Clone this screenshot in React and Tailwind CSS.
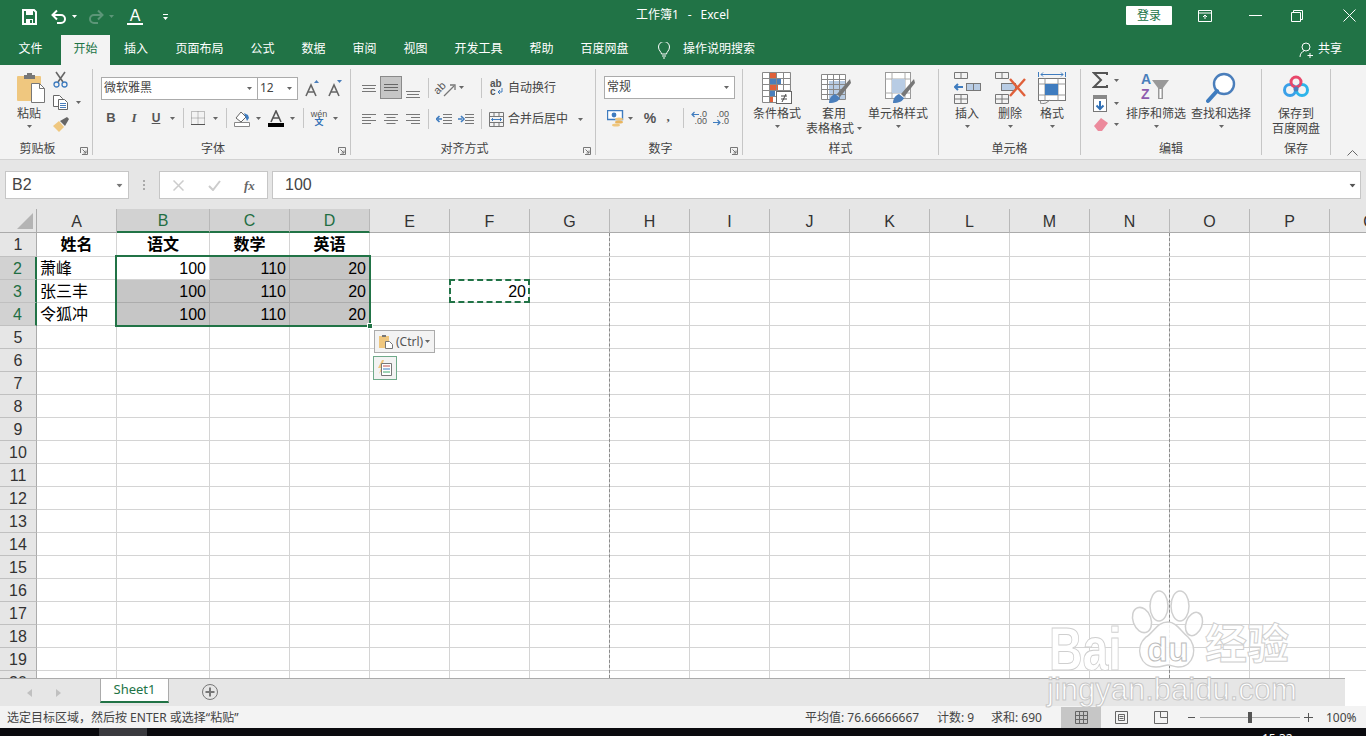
import React from 'react';

const G = '#217346';
const Caret = ({ c = '#666', className = '' }) => (
  <svg width="5" height="3" viewBox="0 0 5 3" className={`shrink-0 ${className}`}><path d="M0 0h5L2.5 3z" fill={c} /></svg>
);
const I = ({ w, h, className = '', children }) => (
  <svg width={w} height={h} viewBox={`0 0 ${w} ${h}`} fill="none" className={`shrink-0 ${className}`}>{children}</svg>
);
const Sep = ({ className = '', h = 'h-[20px]' }) => <div className={`w-px ${h} bg-[#c6c6c6] shrink-0 ${className}`} />;

const Launcher = () => (
  <svg width="8" height="8" viewBox="0 0 8 8" className="absolute right-[4px] bottom-[0px]" fill="none">
    <path d="M.5 6V.5H7.5V7.5H2M2.5 2.5L6 6M3.5 6H6V3.5" stroke="#777" />
  </svg>
);
const Group = ({ w, label, children }) => (
  <div className={`${w} h-[86px] mt-[4px] flex flex-col border-r border-[#c6c6c6] shrink-0`}>
    <div className="h-[72px] shrink-0">{children}</div>
    <div className={`relative h-[14px] flex items-center justify-center pt-[2px] text-[12px] leading-none text-[#444] ${label.launcher ? 'pr-[17px]' : ''}`}>
      {label.text}
      {label.launcher && <Launcher />}
    </div>
  </div>
);
const Big = ({ w, icon, lines }) => (
  <div className={`${w} shrink-0 flex flex-col items-center`}>
    <div className="h-[37px] w-full flex items-start justify-center pt-[3px]">{icon}</div>
    {lines.map((l, i) => (
      <div key={i} className="h-[15px] leading-[15px] text-[12px] text-[#444] whitespace-nowrap flex items-center">{l}</div>
    ))}
    {lines.length === 1 && <Caret className="mt-[4px]" />}
  </div>
);

/* icons */
const SaveI = () => (
  <I w={15} h={16} className="ml-[22px]"><path d="M1 1h11l2 2v12H1z" stroke="#fff" strokeWidth="2" /><rect x="4" y="2" width="7" height="4" fill="#fff" /><rect x="4" y="10" width="7" height="5" fill="#fff" /><rect x="8" y="11" width="2" height="3" fill={G} /></I>
);
const Undo = ({ c = '#fff', flip }) => (
  <I w={16} h={15} className={flip ? '-scale-x-100' : ''}><path d="M2 6h8a4 4 0 0 1 0 8H6" stroke={c} strokeWidth="2" /><path d="M6 1.5L1.5 6 6 10.5" stroke={c} strokeWidth="2" /></I>
);
const PasteI = () => (
  <I w={29} h={32} className="ml-[4px]">
    <rect x="0" y="4" width="24" height="25" rx="1" fill="#efc77f" />
    <path d="M7 7V3h3V1h5v2h3v4z" fill="#777" />
    <path d="M14.5 11.5h8l5 5v14h-13z" fill="#fff" stroke="#777" />
    <path d="M22.5 11.5v5h5" stroke="#777" />
  </I>
);
const Scissors = () => (
  <I w={15} h={17}><path d="M3 1l7 10M12 1L5 11" stroke="#666" strokeWidth="1.6" /><circle cx="3.5" cy="13.5" r="2.5" stroke="#3f7cbf" strokeWidth="1.3" /><circle cx="11.5" cy="13.5" r="2.5" stroke="#3f7cbf" strokeWidth="1.3" /></I>
);
const Copy = () => (
  <I w={16} h={15}>
    <path d="M.5.5h6l3 3v8H.5z" fill="#fff" stroke="#666" />
    <path d="M5.5 4.5h6l3 3v7h-9z" fill="#fff" stroke="#666" />
    <path d="M7 8.5h6M7 10.5h6M7 12.5h6" stroke="#4a7ebb" />
  </I>
);
const Brush = () => (
  <I w={17} h={15}><path d="M0 9l6-5 5 6-5 5z" fill="#efc77f" /><path d="M7 4l7-4 2 2-4 7z" fill="#666" /></I>
);
const Ags = ({ up }) => (
  <I w={14} h={17}>
    <path d="M1 16L6 5l5 11M3 12h6" stroke="#666" strokeWidth="1.6" />
    <path d={up ? 'M9 3l2.5-3L14 3z' : 'M9 0h5l-2.5 3z'} fill="#4a7ebb" />
  </I>
);
const Borders = () => (
  <I w={14} h={14}><path d="M.5.5h13v13H.5zM7 .5v13M.5 7h13" stroke="#888" strokeDasharray="1 1" /><path d="M0 13.5h14" stroke="#555" /></I>
);
const Fill = () => (
  <I w={16} h={17}><path d="M2 8l5-6 5 5-5 5z" fill="#fff" stroke="#666" /><path d="M10 3l4 2 1 3-2 3z" fill="#3f7cbf" /><path d="M.5 12.5h15v4H.5z" fill="#fff" stroke="#888" /></I>
);
const FontA = () => (
  <I w={16} h={17}><path d="M3 12L8 1l5 11M5 8h6" stroke="#555" strokeWidth="1.6" /><rect y="13" width="16" height="4" fill="#000" /></I>
);
const AlignV = ({ y }) => (
  <I w={14} h={23}><path d={`M0 ${y}.5h14M1 ${y + 3}.5h12M0 ${y + 6}.5h14`} stroke="#777" /></I>
);
const AlignH = ({ t }) => (
  <I w={14} h={12}>
    {t === 'l' && <path d="M0 1.5h14M0 4.5h9M0 7.5h14M0 10.5h9" stroke="#777" />}
    {t === 'c' && <path d="M0 1.5h14M2.5 4.5h9M0 7.5h14M2.5 10.5h9" stroke="#777" />}
    {t === 'r' && <path d="M0 1.5h14M5 4.5h9M0 7.5h14M5 10.5h9" stroke="#777" />}
  </I>
);
const Orient = () => (
  <span className="relative w-[20px] h-[18px] flex shrink-0">
    <span className="-rotate-45 font-['Liberation_Sans'] text-[11px] leading-none text-[#555] ml-[-1px] mt-[3px]">ab</span>
    <svg width="20" height="18" viewBox="0 0 20 18" fill="none" className="absolute left-0 top-0"><path d="M8 17L18 7" stroke="#777" strokeWidth="1.3" /><path d="M14 6h5v5" stroke="#777" strokeWidth="1.3" /></svg>
  </span>
);
const Indent = ({ out }) => (
  <I w={16} h={12}>
    <path d="M7 1.5h9M7 4.5h9M7 7.5h9M7 10.5h9M0 1.5" stroke="#777" />
    <path d={out ? 'M6 6H2M3.5 3L.5 6l3 3' : 'M0 6h4M3 3l3 3-3 3'} stroke="#3f7cbf" strokeWidth="1.6" />
  </I>
);
const Wrap = () => (
  <span className="flex flex-col w-[14px] font-['Liberation_Sans'] text-[10px] leading-[8px] text-[#555] font-bold">
    <span>ab</span><span className="flex">c<svg width="6" height="7" viewBox="0 0 6 7" fill="none" className="ml-[1px]"><path d="M5 0v4H1M3 2L1 4l2 2" stroke="#3f7cbf" /></svg></span>
  </span>
);
const Merge = () => (
  <I w={15} h={15}><path d="M.5.5h14v14H.5zM.5 4.5h14M.5 10.5h14M5 .5v4M10 .5v4M5 10.5v4M10 10.5v4" stroke="#777" /><path d="M2.5 7.5h10M4 6L2.5 7.5 4 9M11 6l1.5 1.5L11 9" stroke="#3f7cbf" /></I>
);
const Money = () => (
  <I w={17} h={17}><path d="M.5.5h15v9H.5z" fill="#fff" stroke="#3f7cbf" strokeWidth="1.4" /><circle cx="7" cy="5" r="2.4" fill="#3f7cbf" /><ellipse cx="12" cy="9" rx="4" ry="1.6" fill="#efc77f" /><ellipse cx="12" cy="12" rx="4" ry="1.6" fill="#e8b560" /><ellipse cx="9" cy="15" rx="4" ry="1.6" fill="#efc77f" /></I>
);
const Dec = ({ inc }) => (
  <span className="relative w-[16px] h-[15px] shrink-0 flex flex-col items-end font-['Liberation_Sans'] text-[9px] leading-[7.5px] text-[#555]">
    <span>{inc ? '.0' : '.00'}</span><span>{inc ? '.00' : '.0'}</span>
    <svg width="8" height="7" viewBox="0 0 8 7" fill="none" className={`absolute left-0 ${inc ? 'top-0' : 'top-[8px]'}`}>
      <path d={inc ? 'M8 3.5H1M3.5 1L1 3.5 3.5 6' : 'M0 3.5h7M4.5 1L7 3.5 4.5 6'} stroke="#3f7cbf" strokeWidth="1.2" />
    </svg>
  </span>
);
const Table = ({ x = 0, y = 0, cols = 4, rows = 5, cw = 7, ch = 6 }) => {
  const l = [];
  for (let c = 0; c <= cols; c++) l.push(`M${x + c * cw + .5} ${y + .5}v${rows * ch}`);
  for (let r = 0; r <= rows; r++) l.push(`M${x + .5} ${y + r * ch + .5}h${cols * cw}`);
  return <path d={l.join('')} stroke="#888" />;
};
const CondI = () => (
  <I w={30} h={32} className="ml-[-1px]">
    <rect x="0.5" y="0.5" width="27" height="30" fill="#fff" />
    <rect x="8" y="1" width="6" height="6" fill="#e0603a" /><rect x="8" y="7" width="11" height="6" fill="#4a7ebb" /><rect x="8" y="13" width="8" height="6" fill="#e0603a" /><rect x="8" y="19" width="5" height="6" fill="#4a7ebb" /><rect x="8" y="25" width="3" height="5" fill="#e0603a" />
    <Table cols={4} rows={5} cw={7} ch={6} />
    <rect x="14.5" y="19.5" width="15" height="12" fill="#fff" stroke="#666" />
    <path d="M19 24h6M19 27h6M24 22l-4 8" stroke="#444" />
  </I>
);
const TableStyle = () => (
  <I w={30} h={32} className="ml-[4px]">
    <rect x="0.5" y="2.5" width="24" height="25" fill="#fff" />
    <rect x="8" y="9" width="16" height="18" fill="#b8cce4" />
    <Table y={2} cols={4} rows={5} cw={6} ch={5} />
    <path d="M29 7L16 22l3 3L30 11z" fill="#777" />
    <path d="M8 31c0-5 3-8 6-9l5 4c-1 3-5 5-11 5z" fill="#4a7ebb" />
  </I>
);
const CellStyle = () => (
  <I w={30} h={32} className="ml-[4px]">
    <rect x="0.5" y="0.5" width="25" height="26" fill="#fff" stroke="#999" />
    <path d="M.5 7h25M.5 21h25M7 .5v26M20 .5v26" stroke="#aaa" />
    <rect x="7" y="7" width="13" height="14" fill="#b8cce4" />
    <path d="M29 7L16 22l3 3L30 11z" fill="#777" />
    <path d="M8 31c0-5 3-8 6-9l5 4c-1 3-5 5-11 5z" fill="#4a7ebb" />
  </I>
);
const Ins = () => (
  <I w={27} h={32}>
    <path d="M.5.5h13v6H.5zM7 .5v6M.5 22.5h13v9H.5zM.5 27h13M7 22.5v9" stroke="#777" />
    <rect x="12.5" y="11.5" width="14" height="7" fill="#b8cce4" stroke="#777" /><path d="M19.5 11.5v7" stroke="#777" />
    <path d="M9 15H1M4 12l-3 3 3 3" stroke="#3f7cbf" strokeWidth="2" />
  </I>
);
const Del = () => (
  <I w={31} h={32}>
    <path d="M.5.5h13v6H.5zM7 .5v6M.5 22.5h13v9H.5zM.5 27h13M7 22.5v9" stroke="#777" />
    <rect x="6.5" y="11.5" width="14" height="7" fill="#b8cce4" stroke="#777" />
    <path d="M15 7l15 17M30 7L15 24" stroke="#e0603a" strokeWidth="2.4" />
  </I>
);
const Fmt = () => (
  <I w={28} h={32}>
    <path d="M.5 0v5M27.5 0v5M3 2.5h22M5 .5L3 2.5 5 4.5M23 .5l2 2-2 2" stroke="#3f7cbf" />
    <rect x=".5" y="6.5" width="27" height="22" fill="#fff" stroke="#777" />
    <path d="M.5 12h27M.5 23h27M7 6.5v22M20 6.5v22" stroke="#999" />
    <rect x="7" y="12" width="13" height="11" fill="#3f7cbf" />
    <path d="M2 28l1 4 5-1 4-3" stroke="#888" />
  </I>
);
const Sigma = () => (
  <I w={16} h={16}><path d="M15 3V1H2l7 7-7 7h13v-2" stroke="#555" strokeWidth="2" /></I>
);
const FillDown = () => (
  <I w={14} h={17}><rect x=".5" y=".5" width="13" height="16" fill="#fff" stroke="#777" /><rect x="0" y="0" width="14" height="4" fill="#888" /><path d="M7 6v8M3.5 10.5L7 14l3.5-3.5" stroke="#2f6fb5" strokeWidth="2" /></I>
);
const Eraser = () => (
  <I w={14} h={13}><path d="M0 8l7-8 7 5-6 8H4z" fill="#ec8a9c" /></I>
);
const Sort = () => (
  <span className="relative flex w-[30px] h-[32px]">
    <span className="flex flex-col font-['Liberation_Sans'] font-bold text-[14px] leading-[15px]">
      <span className="text-[#4a7ebb]">A</span><span className="text-[#8e5bae]">Z</span>
    </span>
    <svg width="17" height="20" viewBox="0 0 17 20" className="ml-[1px] mt-[8px]" fill="none"><path d="M0 0h17l-6 8v11h-5V8z" fill="#999" /><path d="M7.5 9v9h2V9" fill="#fff" /></svg>
  </span>
);
const Find = () => (
  <I w={30} h={32}><circle cx="18" cy="12" r="10" fill="#fff" stroke="#4a7ebb" strokeWidth="2.4" /><path d="M11 19L2 29" stroke="#3f7cbf" strokeWidth="4" strokeLinecap="round" /></I>
);
const BaiduCloud = () => (
  <I w={26} h={24}>
    <circle cx="7" cy="15" r="5.5" stroke="#3aa0e8" strokeWidth="3" />
    <circle cx="19" cy="15" r="5.5" stroke="#2db4ea" strokeWidth="3" />
    <circle cx="13" cy="7" r="5" stroke="#e8476a" strokeWidth="3" />
    <circle cx="13" cy="14" r="2.5" fill="#4a7ebb" />
  </I>
);
const GridIco = () => (
  <I w={13} h={13}><path d="M.5.5h12v12H.5zM4.5.5v12M8.5.5v12M.5 4.5h12M.5 8.5h12" stroke="#666" /></I>
);
const PageIco = () => (
  <I w={13} h={13}><path d="M.5.5h12v12H.5z" stroke="#666" /><path d="M3.5 3.5h6v6h-6zM4.5 5.5h4M4.5 7.5h4" stroke="#666" /></I>
);
const BreakIco = () => (
  <I w={14} h={13}><path d="M.5 12.5V.5h13v12zM6.5.5v6h7" stroke="#666" /></I>
);

const cols = [
  ['A', 'w-[80px]'], ['B', 'w-[93px]'], ['C', 'w-[80px]'], ['D', 'w-[80px]'], ['E', 'w-[80px]'], ['F', 'w-[80px]'],
  ['G', 'w-[80px]'], ['H', 'w-[80px]'], ['I', 'w-[80px]'], ['J', 'w-[80px]'], ['K', 'w-[80px]'], ['L', 'w-[80px]'],
  ['M', 'w-[80px]'], ['N', 'w-[80px]'], ['O', 'w-[80px]'], ['P', 'w-[80px]'], ['Q', 'w-[80px]'],
];
const data = {
  1: ['姓名', '语文', '数学', '英语'],
  2: ['萧峰', '100', '110', '20'],
  3: ['张三丰', '100', '110', '20'],
  4: ['令狐冲', '100', '110', '20'],
};
const tabs = [
  ['文件', 'w-[61px]'], ['开始', 'w-[49px]'], ['插入', 'w-[52px]'], ['页面布局', 'w-[75px]'], ['公式', 'w-[51px]'], ['数据', 'w-[51px]'],
  ['审阅', 'w-[51px]'], ['视图', 'w-[51px]'], ['开发工具', 'w-[75px]'], ['帮助', 'w-[51px]'], ['百度网盘', 'w-[75px]'],
];

function Cell({ r, c, i }) {
  const v = data[r] && data[r][i];
  const inSel = r >= 2 && r <= 4 && i >= 1 && i <= 3;
  const active = r === 2 && i === 1;
  const grey = inSel && !active;
  const isF3 = r === 3 && c[0] === 'F';
  const bold = r === 1;
  return (
    <div className={`${c[1]} shrink-0 h-full border-r border-b pt-[1px] ${grey ? 'bg-[#c6c6c6] border-[#acacac]' : 'border-[#d4d4d4]'} ${bold ? 'font-bold justify-center' : i === 0 ? 'pl-[3px] justify-start' : 'justify-end pr-[3px]'} flex items-center text-[16px] leading-none text-black overflow-hidden`}>
      {isF3 ? '20' : v}
    </div>
  );
}

export default function App() {
  return (
    <div className="relative w-[1366px] h-[736px] overflow-hidden flex flex-col bg-white font-['Noto_Sans','Noto_Sans_CJK_SC',sans-serif]">
      {/* title bar */}
      <div className="h-[35px] shrink-0 bg-[#217346] flex items-center pb-[2px] text-white">
        <SaveI />
        <div className="ml-[14px]"><Undo /></div>
        <Caret c="#fff" className="ml-[5px]" />
        <div className="ml-[11px]"><Undo c="#5c9678" flip /></div>
        <Caret c="#5c9678" className="ml-[5px]" />
        <div className="ml-[13px] w-[16px] h-[17px] flex flex-col items-center">
          <span className="font-['Liberation_Sans'] text-[16px] leading-[15px] font-normal">A</span>
          <span className="w-full h-[2px] bg-white" />
        </div>
        <svg width="5" height="6" viewBox="0 0 5 6" className="ml-[20px]"><path d="M0 0h5v1H0zM0 3h5L2.5 6z" fill="#fff" /></svg>
        <div className="ml-[468px] mb-[4px] w-[93px] text-[12px] whitespace-nowrap flex justify-between"><span>工作簿1</span><span>-</span><span>Excel</span></div>
        <div className="ml-[397px] mb-[2px] flex items-center">
          <div className="w-[46px] h-[19px] bg-white rounded-[1px] text-[12px] text-[#217346] flex items-center justify-center">登录</div>
          <svg width="14" height="12" viewBox="0 0 14 12" fill="none" className="ml-[26px]"><path d="M.5.5h13v11H.5zM.5 3h13M7 9V5M5 7l2-2 2 2" stroke="#fff" /></svg>
          <svg width="13" height="1" className="ml-[37px]"><rect width="13" height="1" fill="#fff" /></svg>
          <svg width="12" height="12" viewBox="0 0 12 12" fill="none" className="ml-[29px]"><path d="M.5 2.5h9v9h-9zM2.5 2.5v-2h9v9h-2" stroke="#fff" /></svg>
          <svg width="13" height="13" viewBox="0 0 13 13" fill="none" className="ml-[40px]"><path d="M.5.5l12 12M12.5.5l-12 12" stroke="#fff" /></svg>
        </div>
      </div>
      {/* tabs */}
      <div className="h-[30px] shrink-0 bg-[#217346] flex items-stretch text-white text-[12px]">
        {tabs.map(([t, w]) => (
          <div key={t} className={`${w} shrink-0 flex items-center justify-center pb-[2px] ${t === '开始' ? 'bg-[#f3f3f3] text-[#217346]' : ''}`}>{t}</div>
        ))}
        <svg width="14" height="17" viewBox="0 0 14 17" fill="none" className="ml-[15px] self-center shrink-0"><path d="M4.5 12c0-2-3-3.500-3-7a5.500 5.500 0 0 1 11 0c0 3.500-3 5-3 7zM5 14h4M6 16h2" stroke="#fff" /></svg>
        <div className="ml-[12px] self-center w-[72px] whitespace-nowrap pb-[2px]">操作说明搜索</div>
        <svg width="15" height="16" viewBox="0 0 15 16" fill="none" className="ml-[544px] self-center shrink-0"><circle cx="7" cy="5" r="4" stroke="#fff" /><path d="M1 15c0-3 2-5.500 4-6M11 11v5M8.500 13.500h5.500" stroke="#fff" /></svg>
        <div className="ml-[4px] self-center whitespace-nowrap pb-[2px]">共享</div>
      </div>
      {/* ribbon */}
      <div className="h-[95px] shrink-0 bg-[#f3f3f3] border-b border-[#d2d2d2] flex">
        <Group w="w-[93px]" label={{ text: '剪贴板', launcher: true }}>
          <div className="flex pl-[15px]">
            <Big w="w-[28px]" icon={<PasteI />} lines={['粘贴']} />
            <div className="ml-[10px] pt-[2px] flex flex-col">
              <div className="h-[17px]"><Scissors /></div>
              <div className="mt-[7px] h-[15px] flex items-center"><Copy /><Caret className="ml-[7px]" /></div>
              <div className="mt-[7px] h-[15px]"><Brush /></div>
            </div>
          </div>
        </Group>
        <Group w="w-[258px]" label={{ text: '字体', launcher: true }}>
          <div className="pl-[8px]">
            <div className="flex items-center mt-[8px] h-[23px]">
              <div className="w-[157px] h-full bg-white border border-[#ababab] flex items-center justify-between pl-[2px] pr-[5px] pb-[1px] text-[12px] text-[#444]">微软雅黑<Caret /></div>
              <div className="w-[40px] h-full bg-white border border-[#ababab] border-l-0 flex items-center justify-between pl-[2px] pr-[5px] pb-[1px] text-[12px] text-[#444]">12<Caret /></div>
              <div className="ml-[7px]"><Ags up /></div>
              <div className="ml-[9px]"><Ags /></div>
            </div>
            <div className="flex items-center mt-[7px] h-[22px] text-[#555] font-['Liberation_Serif']">
              <span className="ml-[3px] w-[14px] text-center font-['Liberation_Sans'] font-bold text-[13px]">B</span>
              <span className="ml-[9px] w-[14px] text-center italic font-bold text-[13px]">I</span>
              <span className="ml-[8px] w-[14px] text-center font-['Liberation_Sans'] font-bold text-[12px] underline">U</span>
              <Caret className="ml-[7px]" />
              <Sep className="ml-[8px]" />
              <div className="ml-[7px]"><Borders /></div>
              <Caret className="ml-[8px]" />
              <Sep className="ml-[8px]" />
              <div className="ml-[7px]"><Fill /></div>
              <Caret className="ml-[6px]" />
              <div className="ml-[7px]"><FontA /></div>
              <Caret className="ml-[6px]" />
              <Sep className="ml-[8px]" />
              <div className="ml-[7px] w-[16px] flex flex-col items-center font-['Liberation_Sans'] text-[9px] leading-[8px]"><span>wén</span><span className="text-[#2f6fb5] font-['Noto_Sans_CJK_SC'] text-[9px] font-bold">文</span></div>
              <Caret className="ml-[6px]" />
            </div>
          </div>
        </Group>
        <Group w="w-[245px]" label={{ text: '对齐方式', launcher: true }}>
          <div className="pl-[11px]">
            <div className="flex items-center mt-[7px] h-[23px]">
              <AlignV y={9} />
              <div className="ml-[4px] w-[22px] h-[23px] bg-[#c6c6c6] border border-[#8a8a8a] flex items-center justify-center"><I w={14} h={9}><path d="M0 1.500h14M0 4.500h14M0 7.500h14" stroke="#666" /></I></div>
              <div className="ml-[4px]"><AlignV y={15} /></div>
              <Sep className="ml-[8px]" />
              <div className="ml-[7px]"><Orient /></div>
              <Caret className="ml-[3px]" />
              <Sep className="ml-[17px]" />
              <div className="ml-[8px]"><Wrap /></div>
              <span className="ml-[4px] text-[12px] text-[#444]">自动换行</span>
            </div>
            <div className="flex items-center mt-[9px] h-[22px]">
              <AlignH t="l" />
              <div className="ml-[8px]"><AlignH t="c" /></div>
              <div className="ml-[8px]"><AlignH t="r" /></div>
              <Sep className="ml-[8px]" />
              <div className="ml-[7px]"><Indent out /></div>
              <div className="ml-[6px]"><Indent /></div>
              <Sep className="ml-[7px]" />
              <div className="ml-[7px]"><Merge /></div>
              <span className="ml-[4px] text-[12px] text-[#444] whitespace-nowrap">合并后居中</span>
              <Caret className="ml-[10px]" />
            </div>
          </div>
        </Group>
        <Group w="w-[147px]" label={{ text: '数字', launcher: true }}>
          <div className="pl-[8px]">
            <div className="mt-[7px] w-[131px] h-[23px] bg-white border border-[#ababab] flex items-center justify-between pl-[2px] pr-[5px] pb-[1px] text-[12px] text-[#444]">常规<Caret /></div>
            <div className="flex items-center mt-[8px] h-[22px] text-[#555]">
              <div className="ml-[3px]"><Money /></div>
              <Caret className="ml-[4px]" />
              <span className="ml-[10px] w-[14px] text-center text-[14px] font-['Liberation_Sans'] font-bold">%</span>
              <span className="ml-[8px] w-[6px] text-center text-[13px] font-['Liberation_Serif'] font-bold leading-none mt-[-4px]">,</span>
              <Sep className="ml-[12px]" />
              <div className="ml-[7px]"><Dec inc /></div>
              <div className="ml-[6px]"><Dec /></div>
            </div>
          </div>
        </Group>
        <Group w="w-[196px]" label={{ text: '样式' }}>
          <div className="flex pl-[7px]">
            <Big w="w-[54px]" icon={<CondI />} lines={['条件格式']} />
            <div className="w-[60px] flex flex-col items-center shrink-0">
              <div className="h-[37px] w-full flex justify-center pt-[3px]"><TableStyle /></div>
              <div className="h-[15px] leading-[15px] text-[12px] text-[#444]">套用</div>
              <div className="h-[15px] leading-[15px] text-[12px] text-[#444] whitespace-nowrap flex items-center">表格格式<Caret className="ml-[3px]" /></div>
            </div>
            <Big w="w-[68px]" icon={<CellStyle />} lines={['单元格样式']} />
          </div>
        </Group>
        <Group w="w-[142px]" label={{ text: '单元格' }}>
          <div className="flex pl-[7px]">
            <Big w="w-[42px]" icon={<Ins />} lines={['插入']} />
            <div className="ml-[1px]"><Big w="w-[42px]" icon={<Del />} lines={['删除']} /></div>
            <Big w="w-[42px]" icon={<Fmt />} lines={['格式']} />
          </div>
        </Group>
        <Group w="w-[181px]" label={{ text: '编辑' }}>
          <div className="flex pl-[11px]">
            <div className="w-[30px] shrink-0 pt-[3px] flex flex-col">
              <div className="h-[16px] flex items-center"><Sigma /><Caret className="ml-[6px]" /></div>
              <div className="mt-[7px] h-[17px] flex items-center pl-[1px]"><FillDown /><Caret className="ml-[7px]" /></div>
              <div className="mt-[6px] h-[13px] flex items-center pl-[2px]"><Eraser /><Caret className="ml-[6px]" /></div>
            </div>
            <Big w="w-[68px]" icon={<Sort />} lines={['排序和筛选']} />
            <Big w="w-[62px]" icon={<Find />} lines={['查找和选择']} />
          </div>
        </Group>
        <Group w="w-[69px]" label={{ text: '保存' }}>
          <div className="flex flex-col items-center w-[68px]">
            <div className="h-[37px] pt-[6px]"><BaiduCloud /></div>
            <div className="h-[15px] leading-[15px] text-[12px] text-[#444]">保存到</div>
            <div className="h-[15px] leading-[15px] text-[12px] text-[#444]">百度网盘</div>
          </div>
        </Group>
        <div className="flex-1 flex justify-end items-end pr-[8px] pb-[3px]">
          <svg width="11" height="6" viewBox="0 0 11 6" fill="none"><path d="M.5 5.500l5-5 5 5" stroke="#666" /></svg>
        </div>
      </div>
      {/* formula bar */}
      <div className="h-[49px] shrink-0 bg-[#e6e6e6] flex items-start pt-[11px] pl-[5px]">
        <div className="w-[124px] h-[28px] bg-white border border-[#c6c6c6] flex items-center justify-between pl-[6px] pr-[6px] text-[16px] text-[#444] font-['Liberation_Sans'] shrink-0">B2<Caret c="#777" className="scale-125" /></div>
        <svg width="3" height="11" viewBox="0 0 3 11" className="ml-[14px] mt-[9px] shrink-0"><path d="M0 0h2v2H0zM0 4h2v2H0zM0 8h2v2H0z" fill="#aaa" /></svg>
        <div className="ml-[13px] w-[109px] h-[28px] bg-white border border-[#c6c6c6] flex items-center shrink-0">
          <svg width="11" height="11" viewBox="0 0 11 11" fill="none" className="ml-[13px]"><path d="M.5.5l10 10M10.500.5l-10 10" stroke="#ccc" strokeWidth="1.500" /></svg>
          <svg width="13" height="11" viewBox="0 0 13 11" fill="none" className="ml-[24px]"><path d="M1 6l4 4 7-9" stroke="#ccc" strokeWidth="2" /></svg>
          <span className="ml-[23px] font-['Liberation_Serif'] italic font-bold text-[13px] text-[#666] leading-none">fx</span>
        </div>
        <div className="ml-[4px] w-[1089px] h-[28px] bg-white border border-[#c6c6c6] flex items-center justify-between pl-[12px] pr-[5px] text-[16px] text-[#444] font-['Liberation_Sans'] shrink-0">100<Caret c="#555" className="scale-125" /></div>
      </div>
      {/* sheet */}
      <div className="relative h-[469px] shrink-0 overflow-hidden font-['Liberation_Sans','Noto_Sans_CJK_SC',sans-serif]">
        <div className="flex h-[24px] w-[1500px]">
          <div className="w-[37px] shrink-0 h-full bg-[#e6e6e6] border-r border-b border-[#ababab] flex items-end justify-end pr-[3px] pb-[3px]">
            <svg width="16" height="16" viewBox="0 0 16 16"><path d="M16 0v16H0z" fill="#b4b4b4" /></svg>
          </div>
          {cols.map((c, i) => {
            const s = i >= 1 && i <= 3;
            return (
              <div key={c[0]} className={`${c[1]} shrink-0 h-full flex items-center justify-center pt-[2px] text-[16px] leading-none border-r border-[#b8b8b8] ${s ? 'bg-[#d2d2d2] text-[#1f6e43] border-b-2 border-b-[#217346]' : 'bg-[#e6e6e6] text-[#333] border-b border-b-[#ababab]'}`}>{c[0]}</div>
            );
          })}
        </div>
        {Array.from({ length: 20 }, (_, k) => k + 1).map(r => {
          const s = r >= 2 && r <= 4;
          return (
            <div key={r} className={`flex ${r === 1 ? 'h-[24px]' : 'h-[23px]'} w-[1500px]`}>
              <div className={`w-[37px] shrink-0 h-full flex items-center justify-center pt-[1px] text-[16px] leading-none border-b border-[#c0c0c0] ${s ? 'bg-[#d2d2d2] text-[#1f6e43] border-r-2 border-r-[#217346]' : 'bg-[#e6e6e6] text-[#333] border-r border-r-[#ababab]'}`}>{r}</div>
              {cols.map((c, i) => <Cell key={c[0]} r={r} c={c} i={i} />)}
            </div>
          );
        })}
        {/* page breaks */}
        <div className="absolute left-[609px] top-[24px] bottom-0 border-l border-dashed border-[#8a8a8a]" />
        <div className="absolute left-[1169px] top-[24px] bottom-0 border-l border-dashed border-[#8a8a8a]" />
        {/* selection */}
        <div className="absolute left-[115px] top-[46px] w-[256px] h-[72px] border-2 border-[#217346] pointer-events-none" />
        <div className="absolute left-[367px] top-[114px] w-[6px] h-[6px] bg-[#217346] border border-white" />
        <div className="absolute left-[449px] top-[70px] w-[81px] h-[24px] border-2 border-dashed border-[#217346]" />
        {/* paste tag */}
        <div className="absolute left-[374px] top-[121px] w-[61px] h-[23px] bg-[#f3f3f3] border border-[#ababab] flex items-center pl-[4px] text-[12px] text-[#555] font-['Noto_Sans']">
          <svg width="14" height="15" viewBox="0 0 14 15" fill="none" className="shrink-0"><rect y="2" width="10" height="12" fill="#efc77f" /><path d="M3 3V1h4v2z" fill="#777" /><path d="M6.500 7.500h4l3 3v4h-7z" fill="#fff" stroke="#777" /></svg>
          <span className="ml-[3px] whitespace-nowrap">(Ctrl)</span>
          <Caret className="ml-[2px]" />
        </div>
        <div className="absolute left-[373px] top-[147px] w-[24px] h-[24px] bg-[#f3f3f3] border border-[#6faa8a] flex items-center justify-center">
          <svg width="16" height="16" viewBox="0 0 16 16" fill="none"><path d="M5 0L1 8h3l-2 6 6-8H5l2-6z" fill="#efc77f" /><path d="M4.500 3.500h10v12h-10z" fill="#fff" stroke="#777" /><path d="M6 6h7" stroke="#c0504d" /><path d="M6 9h7" stroke="#3f7cbf" /><path d="M6 12h7" stroke="#3aa76d" /></svg>
        </div>
      </div>
      {/* sheet tabs */}
      <div className="h-[28px] shrink-0 bg-[#e6e6e6] border-t border-[#ababab] flex items-stretch w-[1345px]">
        <svg width="5" height="8" viewBox="0 0 5 8" className="ml-[27px] self-center shrink-0"><path d="M5 0v8L0 4z" fill="#c0c0c0" /></svg>
        <svg width="5" height="8" viewBox="0 0 5 8" className="ml-[24px] self-center shrink-0"><path d="M0 0v8l5-4z" fill="#c0c0c0" /></svg>
        <div className="ml-[39px] mt-[-1px] w-[69px] h-[25px] bg-white border-x border-t border-[#ababab] border-b-2 border-b-[#217346] flex items-center justify-center text-[13px] text-[#217346] font-['Noto_Sans'] shrink-0">Sheet1</div>
        <svg width="16" height="16" viewBox="0 0 16 16" fill="none" className="ml-[33px] self-center shrink-0 mt-[-2px]"><circle cx="8" cy="8" r="7.500" stroke="#777" /><path d="M8 3.500v9M3.500 8h9" stroke="#777" strokeWidth="2" /></svg>
      </div>
      {/* status */}
      <div className="h-[22px] shrink-0 bg-[#f3f3f3] flex items-center pt-[1px] text-[12px] text-[#444] whitespace-nowrap">
        <span className="ml-[7px] w-[798px]">选定目标区域，然后按 ENTER 或选择“粘贴”</span>
        <span className="w-[132px]">平均值: 76.66666667</span>
        <span className="w-[54px]">计数: 9</span>
        <span className="w-[70px]">求和: 690</span>
        <div className="w-[40px] h-full bg-[#c6c6c6] flex items-center justify-center"><GridIco /></div>
        <div className="w-[40px] flex justify-center"><PageIco /></div>
        <div className="w-[40px] flex justify-center"><BreakIco /></div>
        <span className="ml-[7px] w-[7px] h-px bg-[#555]" />
        <div className="ml-[5px] w-[100px] h-px bg-[#aaa] flex items-center justify-center"><span className="w-[4px] h-[11px] bg-[#555]" /></div>
        <svg width="9" height="9" viewBox="0 0 9 9" className="ml-[4px]"><path d="M4 0h1v9H4zM0 4h9v1H0z" fill="#555" /></svg>
        <span className="ml-[13px]">100%</span>
      </div>
      {/* taskbar */}
      <div className="h-[8px] shrink-0 bg-[#0a0a0e] flex overflow-hidden">
        <div className="ml-[99px] w-[48px] h-full bg-[#3a3a3e]" />
        <span className="ml-[1115px] mt-[5px] text-[12px] leading-none text-white h-[12px]">15:32</span>
      </div>
      {/* watermark */}
      <div className="absolute left-[1047px] top-[590px] w-[248px] h-[118px] pointer-events-none font-['Liberation_Sans','Noto_Sans_CJK_SC',sans-serif]">
        <svg width="85" height="80" viewBox="0 0 85 80" fill="#ffffffd9" stroke="#d0d0d0" strokeWidth="1.500" className="absolute left-[75px] top-0">
          <ellipse cx="20" cy="30" rx="9" ry="13" transform="rotate(-20 20 30)" />
          <ellipse cx="37" cy="16" rx="9" ry="15" />
          <ellipse cx="58" cy="16" rx="9" ry="15" />
          <ellipse cx="72" cy="34" rx="8" ry="12" transform="rotate(20 72 34)" />
          <path d="M46 32c8 0 12 8 20 15 10 9 7 30-10 30-4 0-7-2-10-2s-6 2-12 2c-16 0-22-19-10-30 8-5 11-15 22-15z" />
        </svg>
        <div className="absolute left-[2px] top-[28px] text-[62px] leading-none font-bold text-white origin-left scale-x-75 [-webkit-text-stroke:1px_#cfcfcf]">Bai</div>
        <div className="absolute left-[100px] top-[42px] text-[34px] leading-none font-bold text-white [-webkit-text-stroke:1px_#bdbdbd]">du</div>
        <div className="absolute left-[158px] top-[34px] text-[42px] leading-none font-bold text-white whitespace-nowrap [-webkit-text-stroke:1px_#cfcfcf]">经验</div>
        <div className="absolute left-0 top-[84px] text-[31px] leading-none text-white whitespace-nowrap [-webkit-text-stroke:1px_#c8c8c8]">jingyan.baidu.com</div>
      </div>
    </div>
  );
}
